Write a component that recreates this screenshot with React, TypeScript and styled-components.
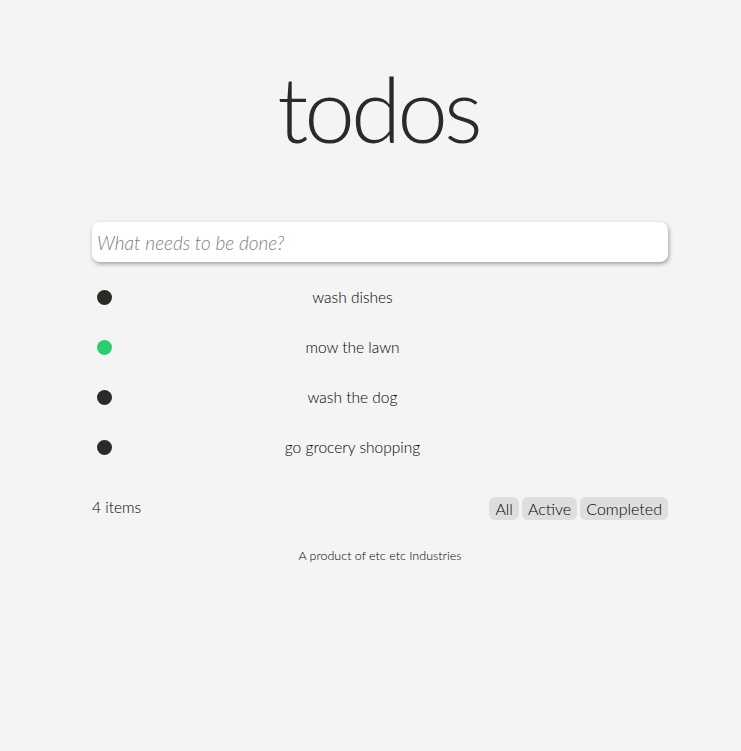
import { styled, createGlobalStyle } from 'styled-components';

type Todo = {
  id: number;
  text: string;
  done: boolean;
};

const todos: Todo[] = [
  { id: 1, text: 'wash dishes', done: false },
  { id: 2, text: 'mow the lawn', done: true },
  { id: 3, text: 'wash the dog', done: false },
  { id: 4, text: 'go grocery shopping', done: false },
];

const filters = ['All', 'Active', 'Completed'];

const App = () => {
  return (
    <>
      <GlobalStyle />
      <S.Wrapper>
        <S.Page>
          <S.Title>todos</S.Title>
          <S.NewTodo placeholder="What needs to be done?" />
          <S.List>
            {todos.map(todo => (
              <S.Item key={todo.id}>
                <S.Dot $done={todo.done} />
                <S.ItemText>{todo.text}</S.ItemText>
              </S.Item>
            ))}
          </S.List>
          <S.Footer>
            <S.Count>4 items</S.Count>
            <S.Filters>
              {filters.map(f => (
                <S.FilterButton key={f}>{f}</S.FilterButton>
              ))}
            </S.Filters>
          </S.Footer>
          <S.Credit>A product of etc etc Industries</S.Credit>
        </S.Page>
      </S.Wrapper>
    </>
  );
};

export default App;

const GlobalStyle = createGlobalStyle`
  body {
    margin: 0;
    background: #f4f4f4;
    font-family: Lato, 'Open Sans', sans-serif;
    font-weight: 300;
    color: #111;
  }
`;

const S = {
  Wrapper: styled.div`
    padding-left: 19px;
  `,
  Page: styled.div`
    width: 576px;
    margin: 0 auto;
    padding-top: 52px;
    display: flex;
    flex-direction: column;
  `,
  Title: styled.h1`
    margin: 0 4px 0 0;
    text-align: center;
    font-size: 91px;
    font-weight: 300;
    line-height: 112px;
    letter-spacing: -4px;
    color: #2a2a26;
  `,
  NewTodo: styled.input`
    box-sizing: border-box;
    margin-top: 58px;
    width: 100%;
    height: 40px;
    padding: 0 5px;
    border: none;
    border-radius: 8px;
    background: #fff;
    box-shadow: 1px 2px 4px rgba(0, 0, 0, 0.35);
    font-family: Lato, sans-serif;
    font-weight: 300;
    font-size: 19px;
    font-style: italic;
    color: #111;
    outline: none;
    &::placeholder {
      color: #808080;
    }
  `,
  List: styled.ul`
    list-style: none;
    margin: 10px 0 0;
    padding: 0;
  `,
  Item: styled.li`
    height: 50px;
    display: flex;
    align-items: center;
    padding: 0 75px 0 5px;
  `,
  Dot: styled.span<{ $done: boolean }>`
    width: 15px;
    height: 15px;
    border-radius: 50%;
    background: ${p => (p.$done ? '#2ecc71' : '#2a2a26')};
  `,
  ItemText: styled.span`
    flex: 1;
    text-align: center;
    font-size: 15.5px;
    color: #000;
  `,
  Footer: styled.div`
    margin-top: 21px;
    display: flex;
    justify-content: space-between;
    align-items: center;
  `,
  Count: styled.span`
    font-size: 15.5px;
    color: #000;
  `,
  Filters: styled.div`
    display: flex;
    gap: 3px;
    margin-top: 4px;
  `,
  FilterButton: styled.button`
    height: 23px;
    padding: 0 6px;
    border: none;
    border-radius: 6px;
    background: #dedede;
    font-family: Lato, sans-serif;
    font-weight: 300;
    font-size: 16px;
    color: #000;
  `,
  Credit: styled.p`
    margin: 28px 0 0;
    text-align: center;
    font-size: 12.5px;
    color: #000;
  `,
};
